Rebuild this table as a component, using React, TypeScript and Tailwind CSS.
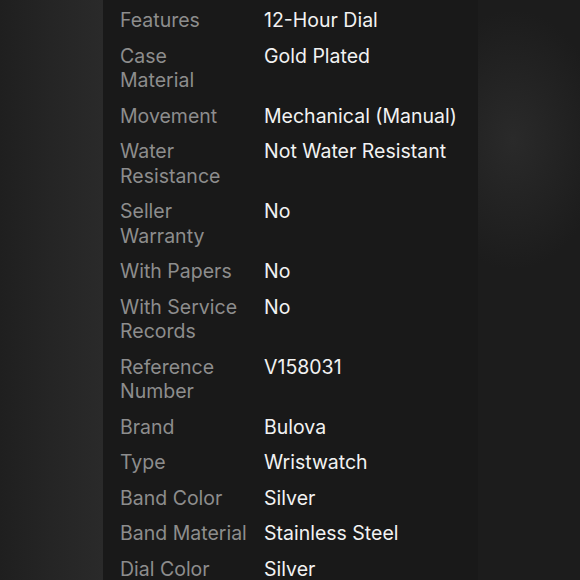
import React from "react";

const rows: [string[], string][] = [
  [["Features"], "12-Hour Dial"],
  [["Case", "Material"], "Gold Plated"],
  [["Movement"], "Mechanical (Manual)"],
  [["Water", "Resistance"], "Not Water Resistant"],
  [["Seller", "Warranty"], "No"],
  [["With Papers"], "No"],
  [["With Service", "Records"], "No"],
  [["Reference", "Number"], "V158031"],
  [["Brand"], "Bulova"],
  [["Type"], "Wristwatch"],
  [["Band Color"], "Silver"],
  [["Band Material"], "Stainless Steel"],
  [["Dial Color"], "Silver"],
];

export default function App() {
  return (
    <div
      className="flex h-[580px] w-[580px] overflow-hidden bg-[#1b1b1b]"
      style={{ fontFamily: "Inter, 'Noto Sans', sans-serif" }}
    >
      <div className="w-[103px] shrink-0 bg-gradient-to-r from-[#1f1f1f] via-[#252525] to-[#2a2a2a]" />
      <div className="w-[375px] shrink-0 bg-[#191919] pl-[17px] pt-[8px]">
        <div className="grid grid-cols-[134px_1fr] gap-x-[10px] gap-y-[11px] text-[19.5px] leading-[24.5px]">
          {rows.map(([k, v]) => (
            <React.Fragment key={k.join(" ")}>
              <div className="flex flex-col whitespace-nowrap text-[#8d8d8d]">
                {k.map((line) => (
                  <span key={line}>{line}</span>
                ))}
              </div>
              <div className="text-[#f2f2f2]">{v}</div>
            </React.Fragment>
          ))}
        </div>
      </div>
      <div className="flex-1 bg-[radial-gradient(ellipse_90px_130px_at_35px_140px,#2a2a2a,#1c1c1c)]" />
    </div>
  );
}
